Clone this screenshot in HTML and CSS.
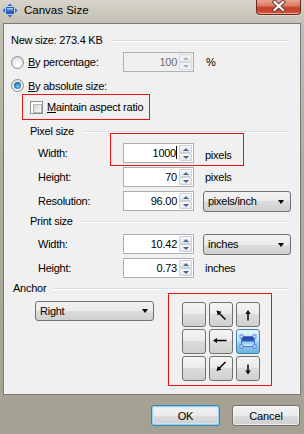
FILE: index.html
```html
<!DOCTYPE html>
<html>
<head>
<meta charset="utf-8">
<title>Canvas Size</title>
<link rel="stylesheet" href="styles.css">
</head>
<body>
<div class="window">
  <div class="titlebar">
    <svg class="app-icon" width="16" height="15" viewBox="0 0 16 15">
      <defs>
        <linearGradient id="ig" x1="0" y1="0" x2="0" y2="1">
          <stop offset="0" stop-color="#cfe8fb"/>
          <stop offset="0.5" stop-color="#3d7fd6"/>
          <stop offset="1" stop-color="#1b3f93"/>
        </linearGradient>
      </defs>
      <rect x="4.5" y="4.5" width="7" height="6" fill="url(#ig)" stroke="#2a5fc8"/>
      <polygon points="0.5,7.5 3,5 3,10" fill="#2f6fd8"/>
      <polygon points="15.5,7.5 13,5 13,10" fill="#2f6fd8"/>
      <polygon points="8,0.5 5.5,3 10.5,3" fill="#2f6fd8"/>
      <polygon points="8,14.5 5.5,12 10.5,12" fill="#2f6fd8"/>
    </svg>
    <span class="title">Canvas Size</span>
    <div class="close">
      <svg width="45" height="15" viewBox="0 0 45 15">
        <path d="M18.5 2 L27 10 M27 2 L18.5 10" stroke="#6b3a32" stroke-width="4.2" stroke-linecap="square" fill="none"/>
        <path d="M18.5 2 L27 10 M27 2 L18.5 10" stroke="#ffffff" stroke-width="2.2" stroke-linecap="square" fill="none"/>
      </svg>
    </div>
  </div>

  <div class="panel">
    <div class="hdr hdr-new"><span>New size: 273.4 KB</span><i class="rule"></i></div>

    <div class="opt-row pct">
      <div class="opt"><span class="radio"></span><span><u>B</u>y percentage:</span></div>
      <div class="spin disabled"><span class="val">100</span><span class="btns"><i class="up"></i><i class="dn"></i></span></div>
      <span class="unit">%</span>
    </div>

    <div class="opt-row abs">
      <div class="opt"><span class="radio on"></span><span><u>B</u>y absolute size:</span></div>
    </div>

    <div class="maintain"><span class="check"></span><span><u>M</u>aintain aspect ratio</span></div>

    <div class="hdr hdr-sub hdr-pixel"><span>Pixel size</span><i class="rule"></i></div>

    <div class="field f-first">
      <span class="lbl">Width:</span>
      <div class="spin"><span class="val">1000<b class="caret"></b></span><span class="btns"><i class="up"></i><i class="dn"></i></span></div>
      <span class="unit low">pixels</span>
    </div>
    <div class="field">
      <span class="lbl">Height:</span>
      <div class="spin"><span class="val">70</span><span class="btns"><i class="up"></i><i class="dn"></i></span></div>
      <span class="unit">pixels</span>
    </div>
    <div class="field">
      <span class="lbl">Resolution:</span>
      <div class="spin"><span class="val">96.00</span><span class="btns"><i class="up"></i><i class="dn"></i></span></div>
      <div class="combo">pixels/inch</div>
    </div>

    <div class="hdr hdr-sub hdr-print"><span>Print size</span><i class="rule"></i></div>

    <div class="field f-print">
      <span class="lbl">Width:</span>
      <div class="spin"><span class="val">10.42</span><span class="btns"><i class="up"></i><i class="dn"></i></span></div>
      <div class="combo">inches</div>
    </div>
    <div class="field">
      <span class="lbl">Height:</span>
      <div class="spin"><span class="val">0.73</span><span class="btns"><i class="up"></i><i class="dn"></i></span></div>
      <span class="unit">inches</span>
    </div>

    <div class="hdr hdr-anchor"><span>Anchor</span><i class="rule"></i></div>

    <div class="anchor">
      <div class="combo combo-anchor">Right</div>
      <div class="gridbox">
        <div class="grid">
          <span class="abtn"></span>
          <span class="abtn">
            <svg width="24" height="25" viewBox="0 0 24 25"><path d="M16.5 17.5 L10 11" stroke="#000" stroke-width="1.5"/><polygon points="7.5,8.5 12.5,9.8 8.8,13.5" fill="#000"/></svg>
          </span>
          <span class="abtn">
            <svg width="24" height="25" viewBox="0 0 24 25"><path d="M12 18.5 L12 11" stroke="#000" stroke-width="1.5"/><polygon points="12,8 9.3,12 14.7,12" fill="#000"/></svg>
          </span>
          <span class="abtn"></span>
          <span class="abtn">
            <svg width="24" height="25" viewBox="0 0 24 25"><path d="M17.5 11.5 L7 11.5" stroke="#000" stroke-width="1.5"/><polygon points="4,11.5 8,9 8,14" fill="#000"/></svg>
          </span>
          <span class="abtn sel">
            <svg width="24" height="25" viewBox="0 0 24 25">
              <defs>
                <linearGradient id="pg" x1="0" y1="0" x2="0" y2="1">
                  <stop offset="0" stop-color="#1c3f8f"/>
                  <stop offset="0.45" stop-color="#2c63c2"/>
                  <stop offset="0.55" stop-color="#8fc6ee"/>
                  <stop offset="1" stop-color="#d9f0fc"/>
                </linearGradient>
              </defs>
              <rect x="5.5" y="7.5" width="13" height="10" fill="url(#pg)" stroke="#4b79e0"/>
              <rect x="4" y="6" width="3" height="3" fill="#e8f3ff" stroke="#3c6be0" stroke-width="0.8"/>
              <rect x="17" y="6" width="3" height="3" fill="#e8f3ff" stroke="#3c6be0" stroke-width="0.8"/>
              <rect x="4" y="16" width="3" height="3" fill="#e8f3ff" stroke="#3c6be0" stroke-width="0.8"/>
              <rect x="17" y="16" width="3" height="3" fill="#e8f3ff" stroke="#3c6be0" stroke-width="0.8"/>
            </svg>
          </span>
          <span class="abtn"></span>
          <span class="abtn">
            <svg width="24" height="25" viewBox="0 0 24 25"><path d="M16.5 6 L10 12.5" stroke="#000" stroke-width="1.5"/><polygon points="7.5,15 8.8,10 12.5,13.7" fill="#000"/></svg>
          </span>
          <span class="abtn">
            <svg width="24" height="25" viewBox="0 0 24 25"><path d="M12 8.5 L12 15" stroke="#000" stroke-width="1.5"/><polygon points="12,18.5 9.3,14.5 14.7,14.5" fill="#000"/></svg>
          </span>
        </div>
      </div>
    </div>

    <div class="mark mark-width"></div>
  </div>

  <div class="footer">
    <button class="btn btn-ok">OK</button>
    <button class="btn btn-cancel">Cancel</button>
  </div>
</div>
</body>
</html>
```

FILE: styles.css
```css
* {
  box-sizing: border-box;
  margin: 0;
  padding: 0;
}

html, body {
  width: 304px;
  height: 434px;
  overflow: hidden;
}

body {
  font-family: "Liberation Sans", Arial, sans-serif;
  font-size: 11px;
  letter-spacing: -0.25px;
  color: #000;
  background: #a6a293;
}

.window {
  width: 304px;
  height: 434px;
  display: flex;
  flex-direction: column;
  background: linear-gradient(#d6d3c9 0px, #c3c0b3 24px, #b2aea0 140px, #a5a192 434px);
}

/* ---------- title bar ---------- */
.titlebar {
  height: 23px;
  flex: none;
  display: flex;
  align-items: flex-start;
}

.app-icon {
  margin: 3px 0 0 2px;
  flex: none;
}

.title {
  margin: 3px 0 0 6px;
  font-size: 11.5px;
  line-height: 15px;
  letter-spacing: 0;
  color: #000;
}

.close {
  margin-left: auto;
  margin-right: 3px;
  width: 45px;
  height: 15px;
  border: 1px solid #6e2b20;
  border-top: none;
  border-radius: 0 0 4px 4px;
  background: linear-gradient(#e9a493 0%, #dc7a63 40%, #c8432b 55%, #c9472e 80%, #d8684c 100%);
  box-shadow: inset 0 -1px 0 rgba(255, 210, 200, 0.6), 0 1px 0 rgba(255, 255, 255, 0.35);
  position: relative;
}

.close svg {
  position: absolute;
  left: -1px;
  top: 0;
}

/* ---------- panel ---------- */
.panel {
  position: relative;
  flex: none;
  height: 372px;
  margin: 0 3px;
  border: 1px solid #7a7a7a;
  background: #f0f0f0;
  display: flex;
  flex-direction: column;
}

.hdr {
  display: flex;
  align-items: center;
  gap: 9px;
  margin-right: 10px;
  height: 16px;
  white-space: nowrap;
}

.hdr .rule {
  flex: 1;
  height: 1px;
  background: #d5dfe5;
  box-shadow: 0 1px 0 #ffffff;
}

.hdr-new {
  margin-top: 8px;
  padding-left: 7px;
}

.hdr-sub {
  padding-left: 26px;
}

.hdr-pixel {
  margin-top: 3px;
}

.hdr-print {
  margin-top: 2px;
}

.hdr-anchor {
  margin-top: 5px;
  height: 10px;
  padding-left: 9px;
  gap: 7px;
}

.opt-row {
  display: flex;
  align-items: center;
  padding-left: 7px;
}

.opt-row.pct {
  margin-top: 4px;
  height: 20px;
}

.opt-row.abs {
  margin-top: 5px;
  height: 17px;
}

.opt {
  width: 112px;
  display: flex;
  align-items: center;
  gap: 4px;
  white-space: nowrap;
}

.radio {
  flex: none;
  width: 13px;
  height: 13px;
  border-radius: 50%;
  border: 1px solid #8d8d8d;
  background: radial-gradient(circle at 50% 65%, #ffffff 15%, #e9e9e9 55%, #cdcdcd 100%);
  position: relative;
}

.radio.on::after {
  content: "";
  position: absolute;
  left: 2px;
  top: 2px;
  width: 7px;
  height: 7px;
  border-radius: 50%;
  background: radial-gradient(circle at 55% 60%, #8ad4f7 0%, #2f83c8 45%, #174d8d 100%);
}

.maintain {
  margin-left: 18px;
  width: 128px;
  height: 26px;
  border: 1px solid #ee1111;
  display: flex;
  align-items: center;
  padding-left: 7px;
  gap: 4px;
  white-space: nowrap;
}

.check {
  flex: none;
  width: 13px;
  height: 13px;
  border: 1px solid #8e8f8f;
  background: #fff;
  padding: 2px;
}

.check::before {
  content: "";
  display: block;
  width: 100%;
  height: 100%;
  border: 1px solid #b6b6b6;
  background: linear-gradient(135deg, #d5d5d5, #f7f7f7);
}

/* ---------- fields ---------- */
.field {
  display: flex;
  align-items: center;
  height: 20px;
  margin-top: 4px;
  padding-left: 34px;
  white-space: nowrap;
}

.f-first {
  margin-top: 4px;
}

.f-print {
  margin-top: 5px;
}

.lbl {
  width: 85px;
  flex: none;
}

.spin {
  flex: none;
  width: 71px;
  height: 20px;
  border: 1px solid #abadb3;
  background: #fff;
  display: flex;
}

.spin .val {
  flex: 1;
  text-align: right;
  padding-right: 2px;
  line-height: 18px;
}

.caret {
  display: inline-block;
  width: 1px;
  height: 13px;
  background: #000;
  vertical-align: -2px;
}

.spin .btns {
  flex: none;
  width: 14px;
  display: flex;
  flex-direction: column;
  padding: 1px 1px 1px 0;
}

.spin .btns i {
  flex: 1;
  display: flex;
  align-items: center;
  justify-content: center;
  border: 1px solid #c9d0d8;
  background: linear-gradient(#f6f8fa, #e2e7ed);
  border-radius: 1px;
}

.spin .btns i::before {
  content: "";
  border-left: 3px solid transparent;
  border-right: 3px solid transparent;
}

.spin .btns i.up::before {
  border-bottom: 3px solid #4e6487;
}

.spin .btns i.dn::before {
  border-top: 3px solid #4e6487;
}

.spin.disabled {
  background: #f0f0f0;
  border-color: #adb2b5;
}

.spin.disabled .val {
  color: #6d6d6d;
}

.spin.disabled .btns i {
  border-color: #d5d9dd;
  background: #f2f2f2;
}

.spin.disabled .btns i.up::before {
  border-bottom-color: #a8b0ba;
}

.spin.disabled .btns i.dn::before {
  border-top-color: #a8b0ba;
}

.unit {
  margin-left: 11px;
}

.opt-row .unit {
  margin-left: 12px;
}

.unit.low {
  padding-top: 4px;
}

.combo {
  flex: none;
  position: relative;
  margin-left: 9px;
  width: 88px;
  height: 21px;
  border: 1px solid #707070;
  border-radius: 3px;
  background: linear-gradient(#f2f2f2 0%, #ebebeb 50%, #dddddd 50%, #cfcfcf 100%);
  padding-left: 4px;
  line-height: 19px;
}

.combo::after {
  content: "";
  position: absolute;
  right: 6px;
  top: 8px;
  border-left: 3.5px solid transparent;
  border-right: 3.5px solid transparent;
  border-top: 4px solid #000;
}

/* ---------- anchor ---------- */
.anchor {
  display: flex;
  align-items: flex-start;
  padding-left: 31px;
}

.combo-anchor {
  margin: 8px 0 0 0;
  width: 119px;
  height: 20px;
  line-height: 18px;
}

.combo-anchor::after {
  right: 5px;
  top: 7px;
}

.gridbox {
  margin-left: 14px;
  width: 104px;
  height: 93px;
  border: 1px solid #ee1111;
  padding: 8px 0 0 13px;
}

.grid {
  display: grid;
  grid-template-columns: repeat(3, 24px);
  grid-auto-rows: 25px;
  gap: 2px 3px;
}

.abtn {
  display: block;
  width: 24px;
  height: 25px;
  border: 1px solid #707070;
  border-radius: 3px;
  background: linear-gradient(#f4f4f4 0%, #ececec 45%, #dcdcdc 50%, #d0d0d0 100%);
  position: relative;
  overflow: hidden;
}

.abtn svg {
  position: absolute;
  left: -1px;
  top: -1px;
}

.abtn.sel {
  border-color: #3c7fb1;
  background: linear-gradient(#e4f4fc 0%, #c5e6f7 45%, #a0d4f0 50%, #6cb5de 100%);
}

/* annotation overlay */
.mark {
  position: absolute;
  border: 1px solid #ee1111;
  pointer-events: none;
}

.mark-width {
  left: 106px;
  top: 109px;
  width: 134px;
  height: 33px;
}

/* ---------- footer ---------- */
.footer {
  flex: none;
  display: flex;
  justify-content: flex-end;
  gap: 12px;
  padding: 10px 4px 0 0;
}

.btn {
  font-family: "Liberation Sans", Arial, sans-serif;
  font-size: 11px;
  letter-spacing: -0.1px;
  color: #000;
  height: 21px;
  border: 1px solid #707070;
  border-radius: 3px;
  background: linear-gradient(#f2f2f2 0%, #ebebeb 50%, #dddddd 50%, #cfcfcf 100%);
  box-shadow: inset 0 0 0 1px rgba(255, 255, 255, 0.6);
}

.btn-ok {
  width: 69px;
  border-color: #3c7fb1;
  box-shadow: inset 0 0 0 1px #93d4f6, inset 0 0 0 2px rgba(200, 235, 252, 0.7);
}

.btn-cancel {
  width: 68px;
}
```
